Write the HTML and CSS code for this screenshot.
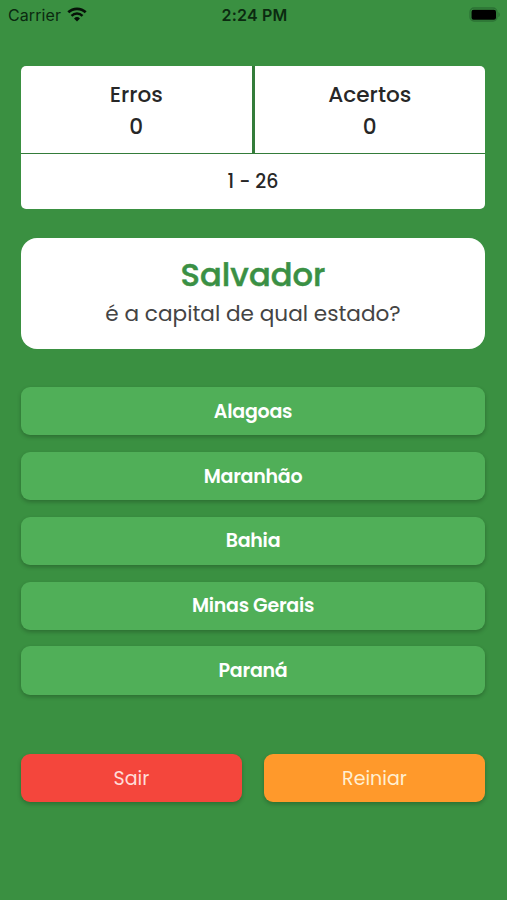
FILE: index.html
```html
<!DOCTYPE html>
<html lang="pt-BR">
<head>
    <meta charset="UTF-8">
    <meta name="viewport" content="width=device-width, initial-scale=1.0">
    <title>Quiz das Capitais</title>
    <link rel="stylesheet" href="styles.css">
</head>
<body>
    <header class="status-bar">
        <div class="carrier">
            <span class="carrier-name">Carrier</span>
            <svg class="wifi" viewBox="0 0 20 15" width="20" height="15">
                <path d="M1.3 5.3a12.5 12.5 0 0 1 17.4 0" fill="none" stroke="#061208" stroke-width="2.7"/>
                <path d="M4.5 8.8a8 8 0 0 1 11 0" fill="none" stroke="#061208" stroke-width="2.5"/>
                <path d="M10 14.5l-3-3.1a4.4 4.4 0 0 1 6 0z" fill="#061208"/>
            </svg>
        </div>
        <span class="clock">2:24 PM</span>
        <svg class="battery" viewBox="0 0 32 16" width="32" height="16">
            <rect x="1" y="1" width="27" height="13" rx="4" fill="none" stroke="#2c7235" stroke-width="1.3"/>
            <rect x="2.5" y="2.7" width="24.5" height="10" rx="2" fill="#000"/>
            <path d="M29.3 5.2c2 .6 2 4.2 0 4.8z" fill="#2c7235"/>
        </svg>
    </header>

    <main class="quiz">
        <section class="score">
            <div class="score-row">
                <div class="score-cell">
                    <span>Erros</span>
                    <span>0</span>
                </div>
                <div class="score-cell">
                    <span>Acertos</span>
                    <span>0</span>
                </div>
            </div>
            <div class="progress">1 - 26</div>
        </section>

        <section class="question">
            <h1>Salvador</h1>
            <p>é a capital de qual estado?</p>
        </section>

        <div class="options">
            <button class="option">Alagoas</button>
            <button class="option">Maranhão</button>
            <button class="option">Bahia</button>
            <button class="option">Minas Gerais</button>
            <button class="option">Paraná</button>
        </div>

        <div class="actions">
            <button class="action exit">Sair</button>
            <button class="action restart">Reiniar</button>
        </div>
    </main>
</body>
</html>
```
FILE: styles.css
```css
* {
    box-sizing: border-box;
}

body {
    margin: 0;
    height: 900px;
    overflow: hidden;
    background-color: #3a9041;
    color: #272727;
    font-family: Poppins, Inter, sans-serif;
}

button {
    font-family: inherit;
    border: none;
    padding: 0;
    color: #fff;
    cursor: pointer;
}

.status-bar {
    display: grid;
    grid-template-columns: 1fr auto 1fr;
    align-items: center;
    height: 30px;
    padding: 0 6px 0 8px;
    color: #0b2a10;
    font-family: Inter, "Liberation Sans", sans-serif;
    font-size: 16px;
}

.carrier {
    display: flex;
    align-items: center;
    gap: 6px;
}

.carrier-name {
    letter-spacing: 0.1px;
}

.wifi {
    margin-bottom: 1px;
}

.clock {
    font-weight: 600;
    letter-spacing: 0.2px;
}

.battery {
    justify-self: end;
}

.quiz {
    padding: 36px 22px 0 21px;
}

.score {
    display: flex;
    flex-direction: column;
    gap: 1px;
    height: 143px;
    border-radius: 5px;
    background-color: #347c3a;
    overflow: hidden;
    font-weight: 500;
}

.score-row {
    display: flex;
    gap: 3px;
    height: 87px;
}

.score-cell {
    flex: 1;
    display: flex;
    flex-direction: column;
    align-items: center;
    padding-top: 13px;
    background-color: #fff;
    font-size: 21.6px;
    line-height: 32px;
}

.progress {
    flex: 1;
    background-color: #fff;
    font-size: 19px;
    line-height: 55px;
    text-align: center;
}

.question {
    height: 111px;
    margin-top: 29px;
    padding-top: 15px;
    border-radius: 16px;
    background-color: #fff;
    text-align: center;
}

.question h1 {
    margin: 0;
    color: #3a9044;
    font-size: 32.2px;
    font-weight: 500;
    line-height: 44px;
    -webkit-text-stroke: 0.5px #3a9044;
}

.question p {
    margin: 0;
    color: #444;
    font-size: 21.6px;
    line-height: 34px;
}

.options {
    display: flex;
    flex-direction: column;
    gap: 16.6px;
    margin-top: 38.3px;
}

.option,
.action {
    height: 48.2px;
    border-radius: 9px;
    box-shadow: 0 2px 4px rgba(0, 0, 0, 0.24);
    font-size: 19px;
}

.option {
    background-color: #50af58;
    font-weight: 600;
    letter-spacing: -0.25px;
}

.actions {
    display: flex;
    gap: 22px;
    margin-top: 59.5px;
}

.action {
    flex: 1;
    padding-top: 1px;
    font-weight: 400;
}

.exit {
    background-color: #f4463c;
    color: #ffdcd8;
}

.restart {
    background-color: #ff992b;
    color: #ffefd2;
}
```
